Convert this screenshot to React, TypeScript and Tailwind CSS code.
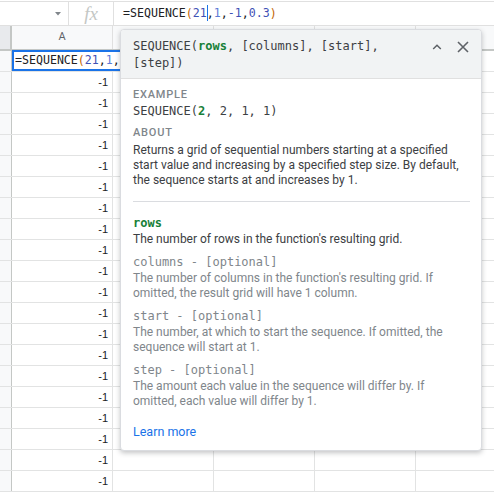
import React from 'react';

const mono = "font-['DejaVu_Sans_Mono',monospace]";
const sans = "font-['Roboto',sans-serif]";

const FormulaText: React.FC<{ cursor?: boolean; short?: boolean }> = ({ cursor, short }) => (
  <span className={`${mono} whitespace-nowrap text-[#202124]`}>
    =SEQUENCE<span className="text-[#c26401]">(</span>
    <span className="text-[#3f51b5]">21</span>
    {cursor && <span className="inline-block w-0 -mr-px h-[16px] border-l border-[#1a73e8] align-[-4px]"></span>}
    ,<span className="text-[#5c7cd6]">1</span>,
    {!short && (
      <>
        <span className="text-[#3f51b5]">-1</span>,<span className="text-[#3f51b5]">0.3</span>
        <span className="text-[#c26401]">)</span>
      </>
    )}
  </span>
);

const ChevronUp = () => (
  <svg width="10" height="10" viewBox="0 0 10 10" fill="none">
    <path d="M1.2 7 L5 3.2 L8.8 7" stroke="#5f6368" strokeWidth="1.5" />
  </svg>
);

const CloseIcon = () => (
  <svg width="12" height="12" viewBox="0 0 12 12" fill="none">
    <path d="M1 1 L11 11 M11 1 L1 11" stroke="#5f6368" strokeWidth="1.6" />
  </svg>
);

const Arg: React.FC<{ name: string; active?: boolean; children: React.ReactNode }> = ({ name, active, children }) => (
  <div className="mt-[7px] first:mt-0">
    <div className={`${mono} text-[12px] leading-[16px] ${active ? 'text-[#188038] font-bold' : 'text-[#80868b]'}`}>
      {active ? name : `${name} - [optional]`}
    </div>
    <div className={`mt-px text-[12px] leading-[15px] ${active ? 'text-[#3c4043]' : 'text-[#80868b]'}`}>{children}</div>
  </div>
);

export default function App() {
  const rows = Array.from({ length: 21 }, (_, i) => i);

  return (
    <div className={`relative w-[494px] h-[492px] overflow-hidden bg-white ${sans}`}>
      {/* formula bar */}
      <div className="mt-px h-[25px] flex border-y border-[#e0e0e0]">
        <div className="w-[69px] border-r border-[#e0e0e0] flex items-center justify-end pr-[7px]">
          <svg width="6" height="4" viewBox="0 0 6 4">
            <path d="M0 0 L6 0 L3 3.5 Z" fill="#80868b" />
          </svg>
        </div>
        <div className="w-[45px] border-r border-[#e0e0e0] flex items-center justify-center">
          <span className="font-['Liberation_Serif',serif] italic text-[19px] leading-none text-[#c4c7c5]">fx</span>
        </div>
        <div className="flex items-center pl-[9px] text-[11.6px]">
          <FormulaText cursor />
        </div>
      </div>

      {/* column headers (B–E letters sit under the popup) */}
      <div className="flex h-[25px] border-b-2 border-[#c4c7c5] bg-[#f8f9fa] text-[11px] text-[#5f6368]">
        <div className="w-[12px] bg-[#e8eaed] border-r-2 border-[#c4c7c5]"></div>
        <div className="w-[101px] border-r border-[#e0e0e0] flex items-center justify-center">A</div>
        <div className="w-[101px] border-r border-[#e0e0e0]"></div>
        <div className="w-[101px] border-r border-[#e0e0e0]"></div>
        <div className="w-[101px] border-r border-[#e0e0e0]"></div>
        <div className="flex-1"></div>
      </div>

      {/* grid */}
      {rows.map((r) => (
        <div key={r} className="flex h-[21px] border-b border-[#e2e3e3] font-['Liberation_Sans',sans-serif] text-[11px] text-[#202124]">
          <div className="w-[12px] bg-[#f8f9fa] border-r border-[#c4c7c5]"></div>
          <div className="w-[101px] border-r border-[#e2e3e3] flex items-center justify-end pr-[4px]">{r > 0 ? '-1' : ''}</div>
          <div className="w-[101px] border-r border-[#e2e3e3]"></div>
          <div className="w-[101px] border-r border-[#e2e3e3]"></div>
          <div className="w-[101px] border-r border-[#e2e3e3]"></div>
          <div className="flex-1"></div>
        </div>
      ))}

      {/* in-cell editor, runs on under the popup */}
      <div className="absolute left-[12px] top-[50px] w-[112px] h-[21px] border-2 border-[#1a73e8] bg-white flex items-center pl-px text-[11.6px]">
        <FormulaText short />
      </div>

      {/* function help popup */}
      <div className="absolute left-[120px] top-[29px] w-[362px] h-[422px] bg-white border border-[#dadce0] rounded-[4px] shadow-[0_2px_5px_rgba(60,64,67,0.3)] overflow-hidden">
        <div className="flex bg-[#f1f3f4] border-b border-[#e0e0e0] pl-[12px] pt-[8px] pb-[6px]">
          <div className={`${mono} flex-1 pr-[10px] text-[12px] leading-[17px] text-[#3c4043]`}>
            SEQUENCE(<span className="text-[#188038] font-bold">rows</span>, [columns], [start], [step])
          </div>
          <div className="flex items-center gap-[15px] pr-[12px] h-[17px]">
            <ChevronUp />
            <CloseIcon />
          </div>
        </div>

        <div className="pl-[12px] pr-[11px] pt-[8px] pb-[10px]">
          <div className="text-[11px] leading-[16px] font-medium tracking-[0.8px] text-[#80868b]">EXAMPLE</div>
          <div className={`${mono} text-[12px] leading-[17px] text-[#3c4043]`}>
            SEQUENCE(<span className="text-[#188038] font-bold">2</span>, 2, 1, 1)
          </div>
          <div className="mt-[5px] text-[11px] leading-[16px] font-medium tracking-[0.8px] text-[#80868b]">ABOUT</div>
          <div className="mt-[2px] text-[12px] leading-[15px] text-[#3c4043]">
            Returns a grid of sequential numbers starting at a specified start value and increasing by a specified step size. By default, the sequence starts at and increases by 1.
          </div>
          <div className="mt-[13px] border-t border-[#dadce0]"></div>
          <div className="mt-[13px]">
            <Arg name="rows" active>The number of rows in the function's resulting grid.</Arg>
            <Arg name="columns">The number of columns in the function's resulting grid. If omitted, the result grid will have 1 column.</Arg>
            <Arg name="start">The number, at which to start the sequence. If omitted, the sequence will start at 1.</Arg>
            <Arg name="step">The amount each value in the sequence will differ by. If omitted, each value will differ by 1.</Arg>
          </div>
          <div className="mt-[15px] text-[12.5px] leading-[16px] text-[#1a73e8]">Learn more</div>
        </div>
      </div>
    </div>
  );
}
